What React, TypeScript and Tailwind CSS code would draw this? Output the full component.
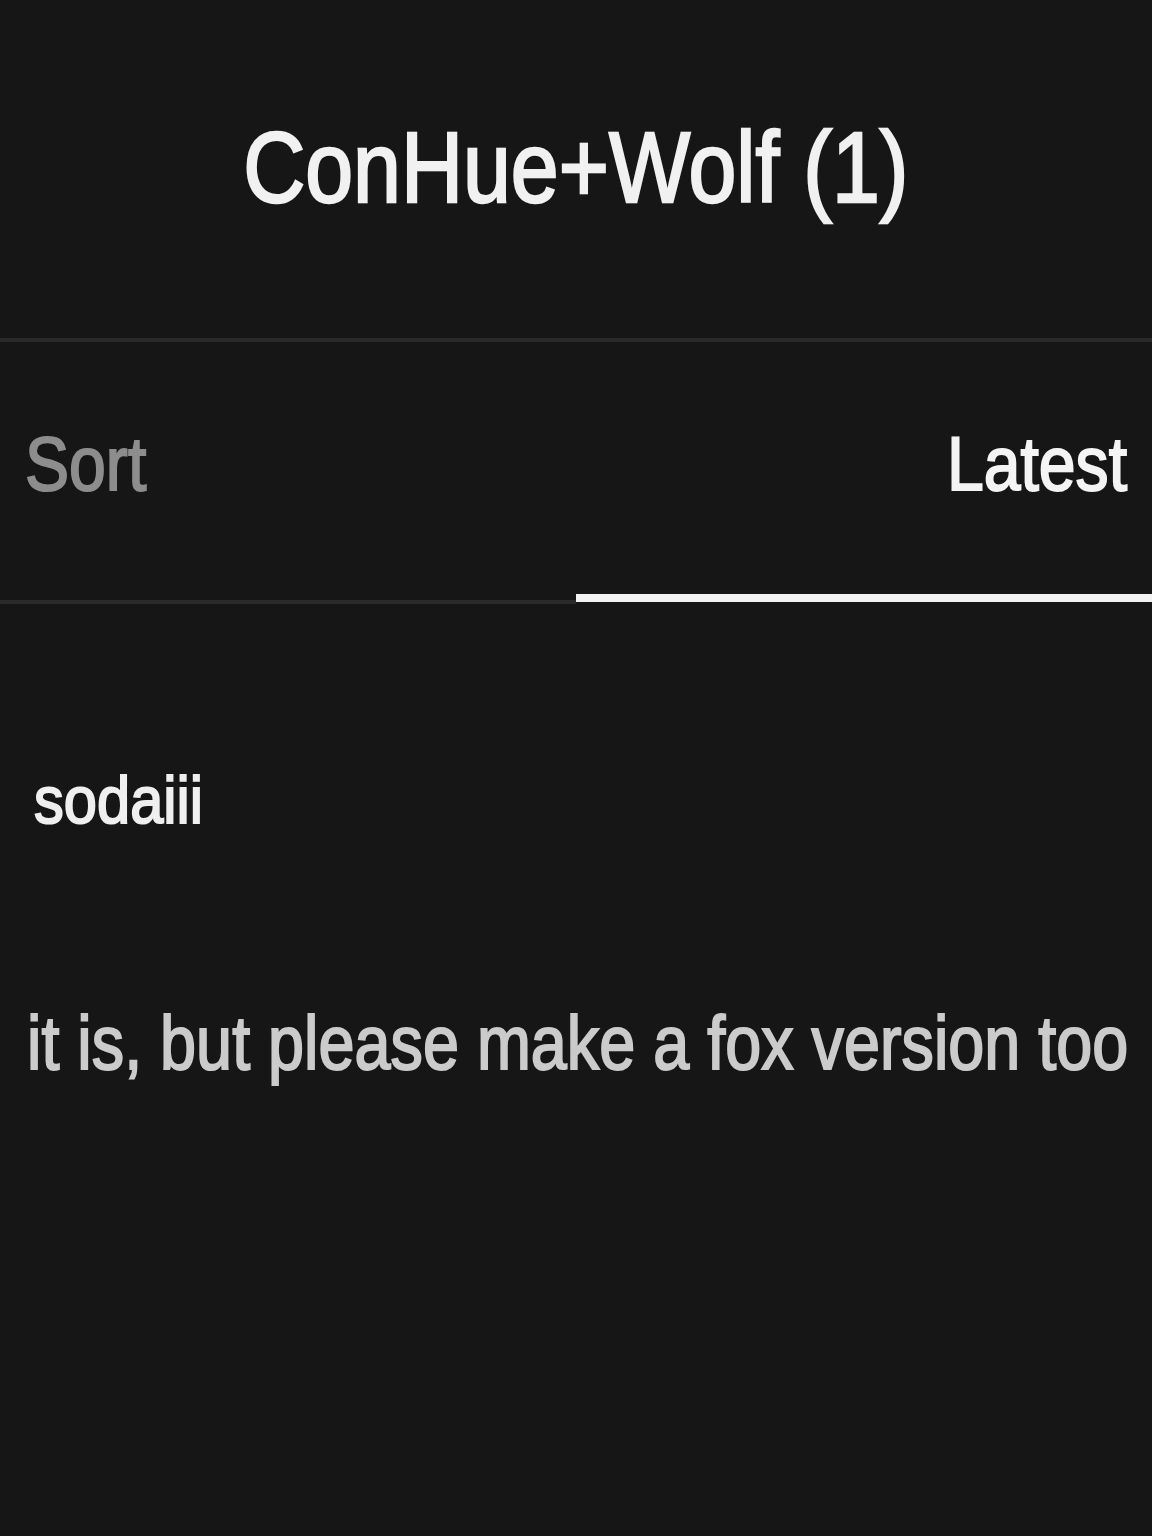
import React from "react";

const comment = {
  author: "sodaiii",
  body: "it is, but please make a fox version too",
};

export default function App() {
  return (
    <div className="min-h-[1536px] w-full bg-[#161616] font-['Liberation_Sans',Arial,sans-serif] overflow-hidden">
      {/* Header */}
      <header className="h-[338px] pt-[117px] text-center">
        <h1 className="text-[100px] leading-none font-normal text-[#f1f1f1] whitespace-nowrap [-webkit-text-stroke-width:2.5px]">
          <span className="inline-block scale-x-[0.86] origin-center">ConHue+Wolf (1)</span>
        </h1>
      </header>
      <div className="h-[4px] bg-[#2a2a2a]" />

      {/* Sort tabs */}
      <div className="grid grid-cols-2 h-[252px] pt-[84px] text-[76px] leading-none [-webkit-text-stroke-width:2px]">
        <div className="pl-[25px]">
          <span className="inline-block scale-x-[0.87] origin-left text-[#8d8d8d]">Sort</span>
        </div>
        <div className="pr-[25px] text-right">
          <span className="inline-block scale-x-[0.87] origin-right text-[#f4f4f4]">Latest</span>
        </div>
      </div>
      <div className="grid grid-cols-2 items-start h-[10px]">
        <div className="mt-[6px] h-[4px] bg-[#2a2a2a]" />
        <div className="h-[8px] bg-[#f2f2f2]" />
      </div>

      {/* Comment */}
      <div className="pt-[162px]">
        <div className="pl-[34px] text-[67px] leading-none text-[#efefef] whitespace-nowrap [-webkit-text-stroke-width:2px]">
          <span className="inline-block scale-x-[0.89] origin-left">{comment.author}</span>
        </div>
        <div className="mt-[172px] pl-[27px] text-[76px] leading-none text-[#cbcbcb] whitespace-nowrap [-webkit-text-stroke-width:2px]">
          <span className="inline-block scale-x-[0.852] origin-left">{comment.body}</span>
        </div>
      </div>
    </div>
  );
}
